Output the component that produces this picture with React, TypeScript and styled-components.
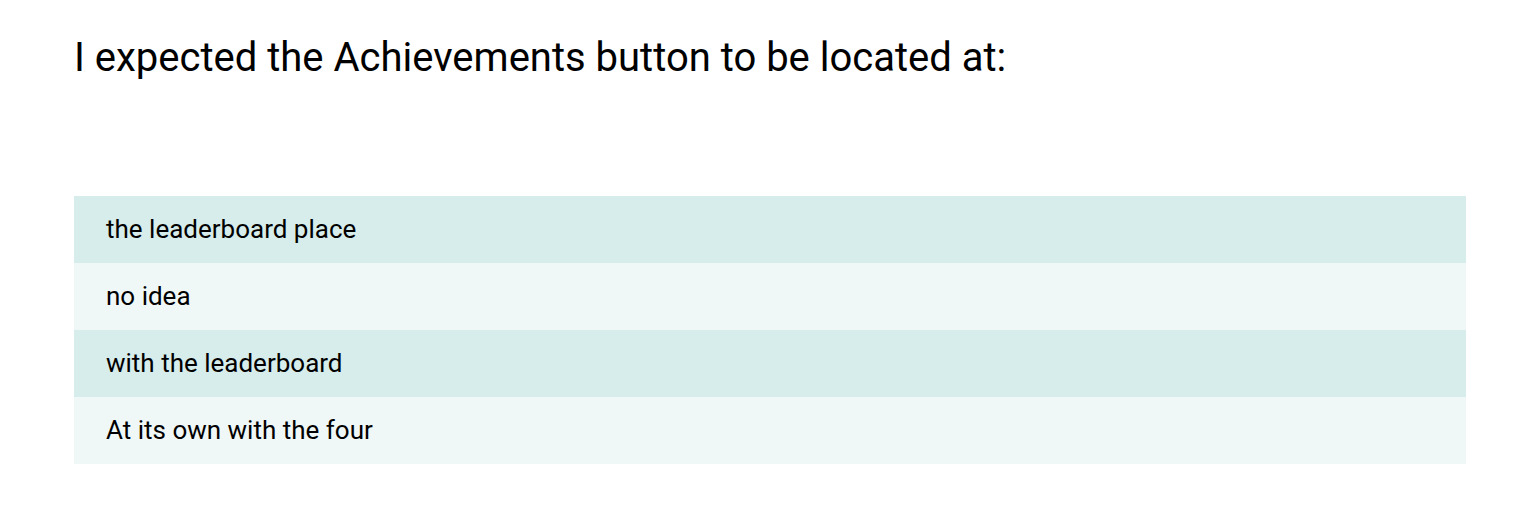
import React from 'react';
import styled, { createGlobalStyle } from 'styled-components';

const GlobalStyle = createGlobalStyle`
    body {
        margin: 0;
        background: #fff;
        font-family: Roboto, "Liberation Sans", sans-serif;
        color: #000;
    }
`

const Wrapper = styled.div`
    padding: 32px 53px 0 74px;
`

// Question title
const Question = styled.h1`
    margin: 0;
    font-size: 40px;
    font-weight: 400;
    line-height: 52px;
`

const Options = styled.ul`
    list-style: none;
    margin: 112px 0 0 0;
    padding: 0;
`

const Option = styled.li<{ $dark: boolean }>`
    box-sizing: border-box;
    height: 67px;
    display: flex;
    align-items: center;
    padding: 0 0 2px 32px;
    font-size: 26px;
    background-color: ${p => (p.$dark ? '#d7edeb' : '#f0f8f7')};
`

const answers = [
    'the leaderboard place',
    'no idea',
    'with the leaderboard',
    'At its own with the four',
]

const App = () => {
    return (
        <Wrapper>
            <GlobalStyle />
            <Question>I expected the Achievements button to be located at:</Question>
            <Options>
                {answers.map((a, i) => (
                    <Option key={a} $dark={i % 2 === 0}>{a}</Option>
                ))}
            </Options>
        </Wrapper>
    );
}

export default App;
